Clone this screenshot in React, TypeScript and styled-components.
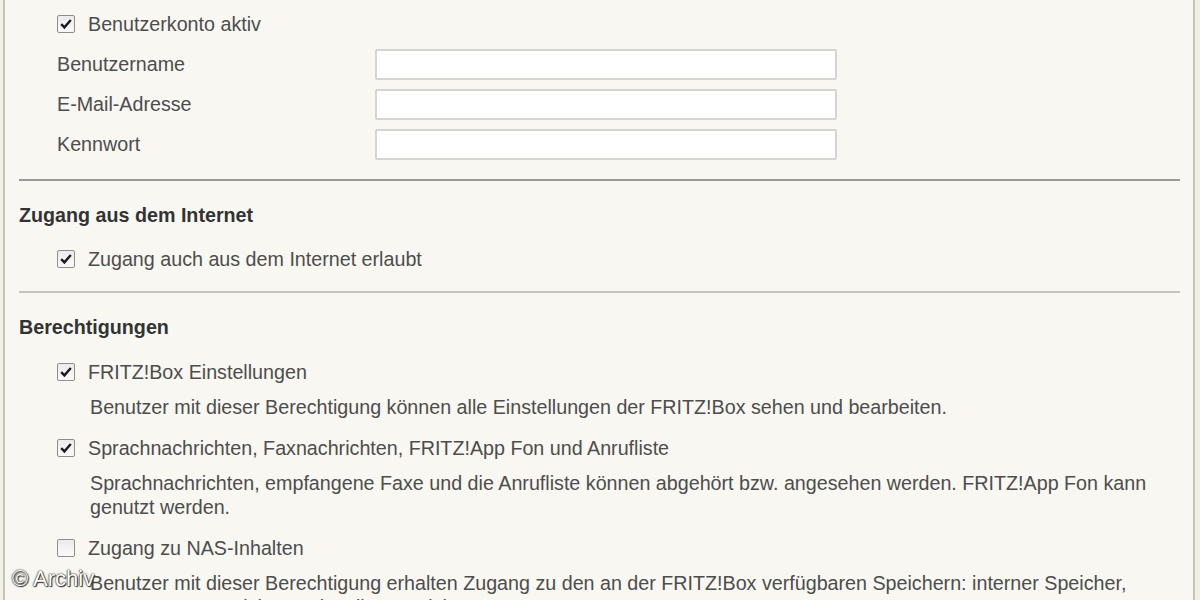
import React from "react";
import styled, { createGlobalStyle } from "styled-components";

const GlobalStyle = createGlobalStyle`
  html, body {
    margin: 0;
    padding: 0;
    background: #eff1e4;
  }
  body {
    font-family: "Liberation Sans", Arial, sans-serif;
  }
`;

const Page = styled.div`
  position: relative;
  height: 600px;
  overflow: hidden;
`;

const Panel = styled.div`
  margin: 0 5px 0 3px;
  height: 100%;
  background: #f8f7f2;
  border-left: 2px solid #c4c6ba;
  border-right: 2px solid #c4c6ba;
  padding: 4px 13px 0 14px;
  color: #4d4d4d;
  font-size: 19.7px;
`;

const Row = styled.div<{ $height?: number }>`
  display: flex;
  align-items: center;
  height: ${(p) => p.$height ?? 40}px;
  margin-left: 38px;
`;

const FieldLabel = styled.label`
  width: 318px;
`;

const Input = styled.div`
  width: 462px;
  height: 31px;
  box-sizing: border-box;
  background: #fff;
  border: 2px solid #d4d4d1;
  border-radius: 2px;
`;

const Box = styled.span`
  width: 18px;
  height: 18px;
  box-sizing: border-box;
  border: 1px solid #8e8e8e;
  border-radius: 2px;
  background: linear-gradient(#ebebeb, #fafafa);
  display: flex;
  align-items: center;
  justify-content: center;
  margin-right: 13px;
  flex-shrink: 0;
`;

const Divider = styled.hr<{ $tone: string; $top: number; $bottom: number }>`
  border: 0;
  height: 2px;
  background: ${(p) => p.$tone};
  margin: ${(p) => p.$top}px 0 ${(p) => p.$bottom}px;
`;

const Heading = styled.h3<{ $after: number }>`
  margin: 0 0 ${(p) => p.$after}px;
  font-size: 19.7px;
  line-height: 36px;
  font-weight: bold;
  color: #333;
`;

const Permission = styled.div`
  margin-bottom: 17px;
`;

const Description = styled.p`
  margin: 11px 0 0 71px;
  line-height: 24px;
  padding-right: 20px;
`;

const Watermark = styled.div`
  position: absolute;
  left: 12px;
  top: 566px;
  font-family: "Liberation Sans", Arial, sans-serif;
  font-size: 22px;
  line-height: 26px;
  color: #fff;
  text-shadow: 0 0 2px #222, 0 0 1px #222, 1px 1px 1px #333;
`;

const Checkbox: React.FC<{ checked?: boolean }> = ({ checked }) => (
  <Box>
    {checked && (
      <svg width="14" height="14" viewBox="0 0 14 14">
        <path d="M2.2 7.2 L5.4 10.4 L11.8 3" fill="none" stroke="#1c1c1c" strokeWidth="2.4" />
      </svg>
    )}
  </Box>
);

const Field: React.FC<{ label: string }> = ({ label }) => (
  <Row>
    <FieldLabel>{label}</FieldLabel>
    <Input />
  </Row>
);

const permissions = [
  {
    label: "FRITZ!Box Einstellungen",
    checked: true,
    text: "Benutzer mit dieser Berechtigung können alle Einstellungen der FRITZ!Box sehen und bearbeiten.",
  },
  {
    label: "Sprachnachrichten, Faxnachrichten, FRITZ!App Fon und Anrufliste",
    checked: true,
    text: "Sprachnachrichten, empfangene Faxe und die Anrufliste können abgehört bzw. angesehen werden. FRITZ!App Fon kann genutzt werden.",
  },
  {
    label: "Zugang zu NAS-Inhalten",
    checked: false,
    text: "Benutzer mit dieser Berechtigung erhalten Zugang zu den an der FRITZ!Box verfügbaren Speichern: interner Speicher, externe USB-Speicher und Online-Speicher.",
  },
];

export default function App() {
  return (
    <Page>
      <GlobalStyle />
      <Panel>
        <Row>
          <Checkbox checked />
          Benutzerkonto aktiv
        </Row>
        <Field label="Benutzername" />
        <Field label="E-Mail-Adresse" />
        <Field label="Kennwort" />

        <Divider $tone="#9a9a98" $top={15} $bottom={16} />
        <Heading $after={6}>Zugang aus dem Internet</Heading>
        <Row>
          <Checkbox checked />
          Zugang auch aus dem Internet erlaubt
        </Row>

        <Divider $tone="#c3c3bf" $top={12} $bottom={16} />
        <Heading $after={15}>Berechtigungen</Heading>
        {permissions.map((p) => (
          <Permission key={p.label}>
            <Row $height={24}>
              <Checkbox checked={p.checked} />
              {p.label}
            </Row>
            <Description>{p.text}</Description>
          </Permission>
        ))}
      </Panel>
      <Watermark>© Archiv</Watermark>
    </Page>
  );
}
